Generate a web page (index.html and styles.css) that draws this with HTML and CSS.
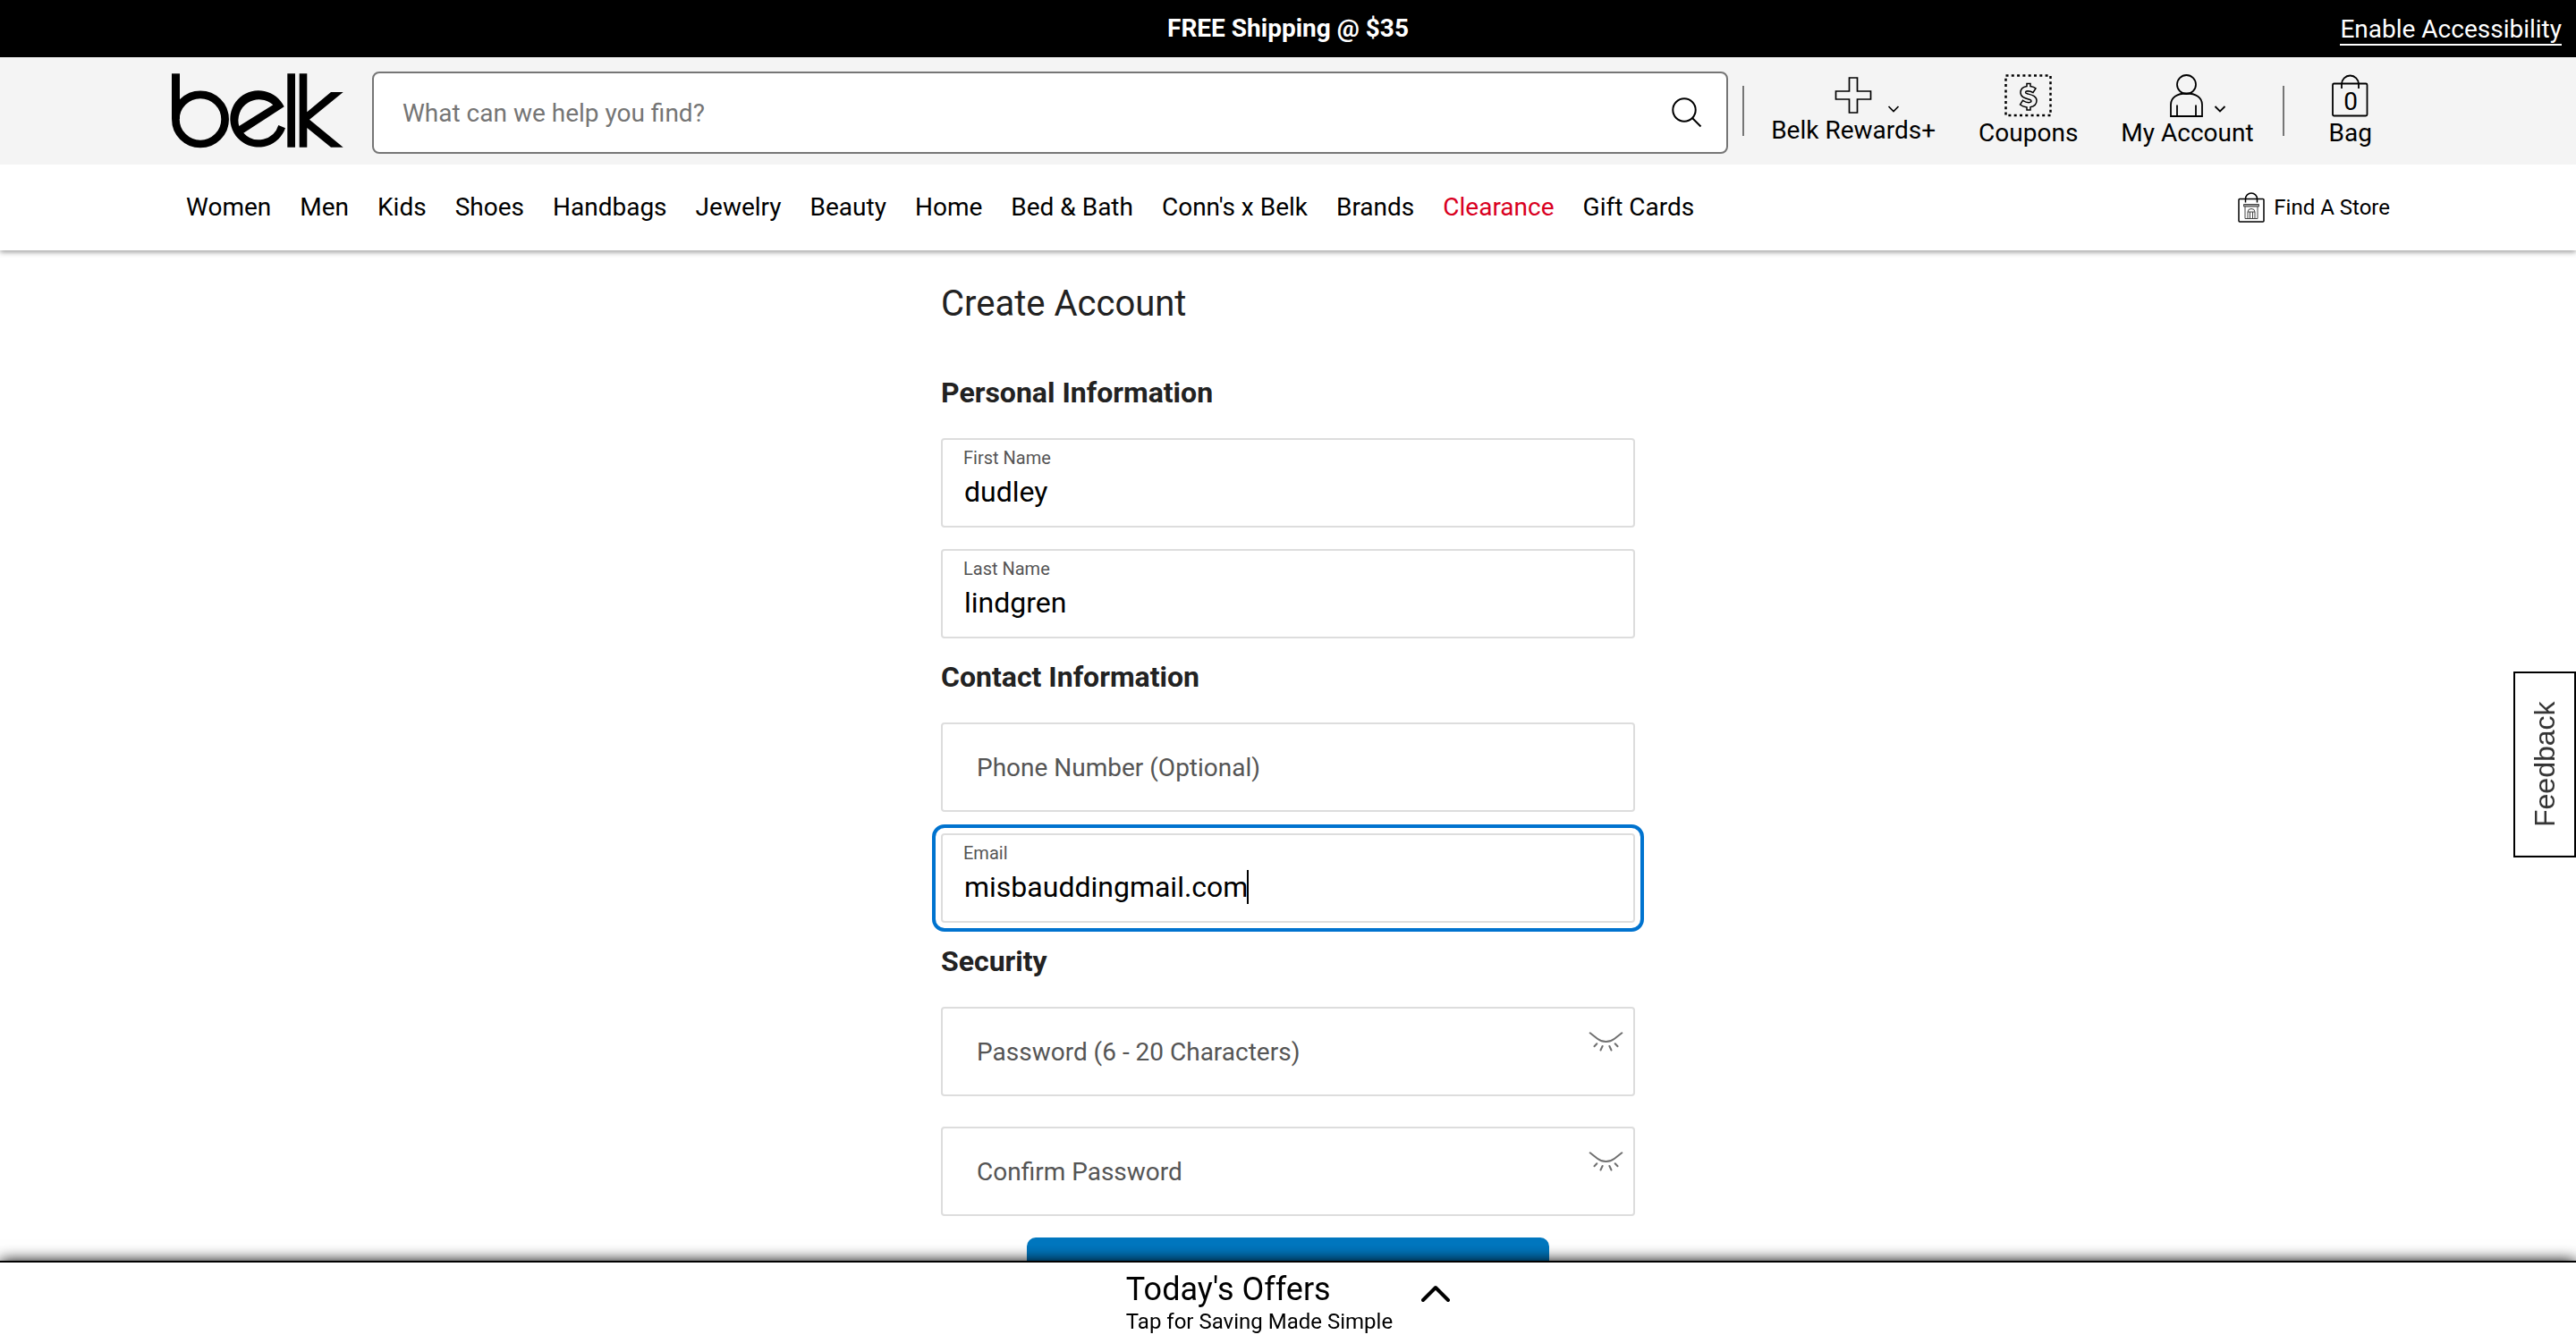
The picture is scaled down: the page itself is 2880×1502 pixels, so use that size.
FILE: index.html
```html
<!DOCTYPE html>
<html lang="en">
<head>
<meta charset="utf-8">
<meta name="viewport" content="width=device-width, initial-scale=1">
<title>Create Account | Belk</title>
<link rel="stylesheet" href="styles.css">
</head>
<body>
<div class="promo">
  <p class="promo-text">FREE Shipping @ $35</p>
  <a class="promo-access" href="#">Enable Accessibility</a>
</div>

<header class="site-header">
  <div class="masthead">
    <a class="logo" href="#" aria-label="Belk">
      <svg width="192" height="84" viewBox="0 0 192 84">
        <path d="M0 0.3H9V51H0Z"/>
        <circle cx="32" cy="51.4" r="27.6" fill="none" stroke="#000" stroke-width="8.7"/>
        <path fill-rule="evenodd" d="M125.7 37.3A31.7 31.7 0 1 0 127 61.3L119.3 58A23 23 0 0 1 80.3 66.7ZM75.3 59A23.3 23.3 0 0 1 113.3 35.3Z"/>
        <path d="M129.3 0.3H138V82.8H129.3ZM142.7 0.3H151.3V43.3L178 21H191.7L154 51.7L191.7 82.8H178L151.3 61V82.8H142.7Z"/>
      </svg>
    </a>
    <form class="search">
      <input class="search-input" type="text" placeholder="What can we help you find?" aria-label="Search">
      <button class="search-button" type="button" aria-label="Search">
        <svg width="36" height="36" viewBox="0 0 36 36" fill="none" stroke="#000" stroke-width="2">
          <circle cx="15" cy="15" r="12.7"/><path d="M24 24L33.500 33.500"/>
        </svg>
      </button>
    </form>
    <div class="tools">
      <span class="divider"></span>
      <a class="tool" href="#">
        <svg width="104" height="44" viewBox="0 0 104 44" fill="none" stroke="#000" stroke-width="1.700">
          <path d="M47.500 1H56.500V16H71.500V25H56.500V40H47.500V25H32.500V16H47.500Z"/>
          <path d="M91.500 33L97 38.500L102.500 33"/>
        </svg>
        <span>Belk Rewards+</span>
      </a>
      <a class="tool" href="#">
        <svg width="53" height="50" viewBox="0 0 53 50" fill="none" stroke="#000" stroke-width="1.500">
          <rect x="1.500" y="1.500" width="50" height="44.500" stroke-width="2.500" stroke-dasharray="3 3.300"/>
          <path d="M25 10.500H29V13.500C31 13.800 33.500 14.600 35 15.800L32 20.500C30 19.300 28 18.800 26 18.800C23 19 22.600 21 25.500 21.800C30 23 36 24 36 29.500C36 33.500 33 36 29 36.800V40H25V37C22 36.500 19.500 35.600 17.500 34L20.500 29.300C23 31 25.500 31.800 28 31.600C31 31 30.500 29 28 28.200C23.500 27 18 26 18 20.500C18 16.500 21 14.200 25 13.500Z"/>
        </svg>
        <span>Coupons</span>
      </a>
      <a class="tool" href="#">
        <svg width="88" height="50" viewBox="0 0 88 50" fill="none" stroke="#000" stroke-width="1.800">
          <circle cx="43.500" cy="11.500" r="10.500"/>
          <path d="M26 47V34C26 26 33 21.500 43.500 21.500S61 26 61 34V47ZM33 34.500V47M54 34.500V47"/>
          <path d="M75.500 36L81 41.500L86.500 36"/>
        </svg>
        <span>My Account</span>
      </a>
      <span class="divider"></span>
      <a class="tool tool-bag" href="#">
        <svg width="41" height="50" viewBox="0 0 41 50" fill="none" stroke="#000" stroke-width="1.800">
          <rect x="1" y="10.500" width="38.500" height="36" rx="1.500"/>
          <path d="M11 16V11A9.500 9.500 0 0 1 30 11V16"/>
          <text class="bag-count" x="21" y="40" text-anchor="middle">0</text>
        </svg>
        <span>Bag</span>
      </a>
    </div>
  </div>
  <div class="nav-row">
    <nav class="nav">
      <a href="#">Women</a>
      <a href="#">Men</a>
      <a href="#">Kids</a>
      <a href="#">Shoes</a>
      <a href="#">Handbags</a>
      <a href="#">Jewelry</a>
      <a href="#">Beauty</a>
      <a href="#">Home</a>
      <a href="#">Bed &amp; Bath</a>
      <a href="#">Conn's x Belk</a>
      <a href="#">Brands</a>
      <a class="sale" href="#">Clearance</a>
      <a href="#">Gift Cards</a>
    </nav>
    <a class="store" href="#">
      <svg width="30" height="34" viewBox="0 0 30 34" fill="none" stroke="#000" stroke-width="1.500">
        <rect x="1" y="7.500" width="28" height="25.500" rx="1"/>
        <path d="M8.500 11.500V7.500A6.500 6.500 0 0 1 21.500 7.500V11.500"/>
        <g stroke="#444" stroke-width="1">
          <path fill="#999" d="M6.500 13.500H23.500V16H6.500Z"/>
          <path d="M8 16V29.500H22V16M11 29.500V22A4 3.500 0 0 1 19 22V29.500M11 22H19M13.500 22V29.500M16.500 22V29.500"/>
        </g>
      </svg>
      <span>Find A Store</span>
    </a>
  </div>
</header>

<main class="account">
  <h1>Create Account</h1>
  <form>
    <h2>Personal Information</h2>
    <div class="field">
      <label for="first">First Name</label>
      <input id="first" type="text" value="dudley">
    </div>
    <div class="field">
      <label for="last">Last Name</label>
      <input id="last" type="text" value="lindgren">
    </div>

    <h2>Contact Information</h2>
    <div class="field">
      <input class="empty" type="tel" placeholder="Phone Number (Optional)" aria-label="Phone Number (Optional)">
    </div>
    <div class="field">
      <label for="email">Email</label>
      <input id="email" class="active" type="text" value="misbauddingmail.com">
      <span class="caret"></span>
    </div>

    <h2>Security</h2>
    <div class="field">
      <input class="empty" type="password" placeholder="Password (6 - 20 Characters)" aria-label="Password (6 - 20 Characters)">
      <button class="reveal" type="button" aria-label="Show password">
        <svg width="39" height="24" viewBox="0 0 39 24" fill="none" stroke="#707070" stroke-width="2" stroke-linecap="round">
          <path d="M1.700 2.300L10 8.700C13 11 16 12 19.500 12S26 11 29 8.700L37.300 2.300M9.300 14.200L6.500 17.200M15.600 17L13.500 21.500M23.400 17L25.500 21.500M29.700 14.200L32.500 17.200"/>
        </svg>
      </button>
    </div>
    <div class="field field-confirm">
      <input class="empty" type="password" placeholder="Confirm Password" aria-label="Confirm Password">
      <button class="reveal" type="button" aria-label="Show password">
        <svg width="39" height="24" viewBox="0 0 39 24" fill="none" stroke="#707070" stroke-width="2" stroke-linecap="round">
          <path d="M1.700 2.300L10 8.700C13 11 16 12 19.500 12S26 11 29 8.700L37.300 2.300M9.300 14.200L6.500 17.200M15.600 17L13.500 21.500M23.400 17L25.500 21.500M29.700 14.200L32.500 17.200"/>
        </svg>
      </button>
    </div>
    <button class="submit" type="submit" aria-label="Create Account"></button>
  </form>
</main>

<button class="feedback" type="button">Feedback</button>

<button class="offers" type="button">
  <span class="offers-text">
    <span class="offers-title">Today's Offers</span>
    <span class="offers-sub">Tap for Saving Made Simple</span>
  </span>
  <svg width="32" height="52" viewBox="0 0 32 52" fill="none" stroke="#000" stroke-width="4" stroke-linecap="round" stroke-linejoin="round">
    <path d="M2 34L16 20L30 34"/>
  </svg>
</button>
</body>
</html>
```

FILE: styles.css
```css
* {
  box-sizing: border-box;
}

body {
  margin: 0;
  background: #fff;
  color: #000;
  font-family: Roboto, "Liberation Sans", sans-serif;
  font-size: 28px;
  line-height: 32px;
}

a {
  color: inherit;
  text-decoration: none;
}

input,
button {
  font-family: inherit;
}

svg {
  display: block;
}

/* Promo strip */
.promo {
  display: grid;
  grid-template-columns: 1fr auto 1fr;
  align-items: center;
  height: 64px;
  padding: 0 16px;
  background: #000;
  color: #fff;
}

.promo-text {
  grid-column: 2;
  margin: 0;
  font-size: 28px;
  font-weight: 700;
}

.promo-access {
  justify-self: end;
  padding-top: 4px;
  border-bottom: 2px solid #fff;
}

/* Header */
.site-header {
  box-shadow: 0 2px 6px rgba(0, 0, 0, 0.4);
}

.masthead {
  display: flex;
  align-items: center;
  height: 120px;
  padding: 0 192px;
  background: #f4f4f4;
}

.search {
  display: flex;
  flex: 1;
  align-items: center;
  height: 92px;
  margin: 4px 16px 0 32px;
  border: 2px solid #767676;
  border-radius: 8px;
  background: #fff;
}

.search-input {
  flex: 1;
  min-width: 0;
  height: 100%;
  padding: 0 32px;
  border: 0;
  background: none;
  font-size: 28px;
}

.search-input::placeholder {
  color: #757575;
  opacity: 1;
}

.search-button {
  padding: 0 26px;
  border: 0;
  background: none;
}

.tools {
  display: flex;
  align-items: center;
}

.divider {
  width: 2px;
  height: 56px;
  background: #767676;
}

.tool {
  display: flex;
  flex-direction: column;
  align-items: center;
  padding: 0 18px 0 30px;
  white-space: nowrap;
}

.tool-bag {
  padding: 0 36px 0 50px;
}

.tool + .divider {
  margin-left: 14px;
}

.bag-count {
  fill: #000;
  stroke: none;
  font-size: 28px;
}

.nav-row {
  display: flex;
  align-items: center;
  justify-content: space-between;
  height: 96px;
  padding: 0 208px;
  background: #fff;
}

.nav {
  display: flex;
  gap: 32px;
  white-space: nowrap;
}

.sale {
  color: #d9001f;
}

.store {
  display: flex;
  align-items: center;
  gap: 10px;
  font-size: 24px;
}

/* Form */
.account {
  width: 776px;
  max-width: 100%;
  margin: 0 auto;
  padding-top: 36px;
}

h1 {
  margin: 0 0 56px;
  color: #222;
  font-size: 40px;
  font-weight: 400;
  line-height: 48px;
}

h2 {
  margin: 24px 0 32px;
  color: #222;
  font-size: 32px;
  font-weight: 700;
  line-height: 38px;
}

.field {
  position: relative;
}

.field + .field {
  margin-top: 24px;
}

.field + .field-confirm {
  margin-top: 34px;
}

.field label {
  position: absolute;
  top: 10px;
  left: 25px;
  color: #555;
  font-size: 20px;
  line-height: 24px;
}

.field input {
  display: block;
  width: 100%;
  height: 100px;
  padding: 36px 24px 16px;
  border: 2px solid #ddd;
  border-radius: 4px;
  background: #fff;
  color: #000;
  font-size: 32px;
}

.field .empty {
  padding: 0 72px 0 38px;
  font-size: 28px;
}

.empty::placeholder {
  color: #555;
  opacity: 1;
}

.field .active {
  outline: 4px solid #0073cf;
  outline-offset: 6px;
}

.caret {
  position: absolute;
  top: 41px;
  left: 342px;
  width: 2px;
  height: 38px;
  background: #000;
}

.reveal {
  position: absolute;
  top: 27px;
  right: 13px;
  padding: 0;
  border: 0;
  background: none;
}

.submit {
  display: block;
  width: 584px;
  height: 96px;
  margin: 24px auto 0;
  border: 0;
  border-radius: 10px;
  background: #0077bf;
}

/* Fixed overlays */
.feedback {
  position: fixed;
  top: 50%;
  right: 0;
  width: 70px;
  height: 208px;
  padding: 0;
  border: 2px solid #000;
  background: #fff;
  color: #333;
  font-family: "Liberation Sans", Arial, sans-serif;
  font-size: 32px;
  line-height: 36px;
  writing-mode: vertical-rl;
  transform: rotate(180deg);
}

.offers {
  position: fixed;
  right: 0;
  bottom: 0;
  left: 0;
  display: flex;
  justify-content: center;
  gap: 32px;
  padding: 8px 0 10px;
  border: 0;
  border-top: 2px solid #000;
  background: #fff;
  box-shadow: 0 0 16px #000;
  color: #000;
  text-align: left;
}

.offers-text {
  display: flex;
  flex-direction: column;
}

.offers-title {
  font-size: 36px;
  line-height: 44px;
}

.offers-sub {
  font-size: 24px;
  line-height: 28px;
}
```
